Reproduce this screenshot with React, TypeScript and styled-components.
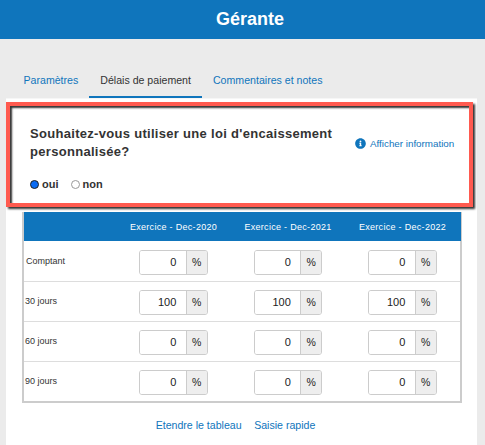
import { FC } from 'react'
import styled, { createGlobalStyle } from 'styled-components'
import { FaInfoCircle } from 'react-icons/fa'

const GlobalStyle = createGlobalStyle`
  html, body {
    margin: 0;
    padding: 0;
    background: #ebebeb;
    overflow: hidden;
  }
  body {
    font-family: "Liberation Sans", Arial, sans-serif;
    color: #333;
  }
`

const Page = styled.div`
  width: 485px;
  height: 445px;
  display: flex;
  flex-direction: column;
  overflow: hidden;
`

const Header = styled.header`
  height: 39px;
  flex: none;
  display: flex;
  align-items: center;
  justify-content: center;
  background: #0f75bc;
  color: #fff;
  font-size: 18px;
  font-weight: 700;
  padding-left: 15px;
`

const Tabs = styled.nav`
  height: 60px;
  flex: none;
  display: flex;
  align-items: flex-end;
  padding-left: 12.5px;
`

const Tab = styled.a<{ $active?: boolean }>`
  height: 38px;
  box-sizing: border-box;
  padding: 2px 11px 0;
  display: flex;
  align-items: center;
  font-size: 10.6px;
  white-space: nowrap;
  color: ${(p) => (p.$active ? '#333' : '#0f75bc')};
  border-bottom: 3px solid ${(p) => (p.$active ? '#0f75bc' : 'transparent')};
`

const Panel = styled.main`
  flex: 1;
  margin: 0 8px 0 6px;
  padding-top: 3px;
  background: #fff;
  box-shadow: 0 -1px 0 #f6f6f6;
`

const Callout = styled.section`
  width: 467px;
  height: 105px;
  box-sizing: border-box;
  padding: 19px 20px 0 20px;
  background: #fff;
  border: 4px solid #ff5a4f;
  box-shadow: 2px 2px 2px #333, inset 2px 2px 2px #333;
  display: grid;
  grid-template-columns: 325px 1fr;
  grid-template-rows: 36px auto;
  align-content: start;
  row-gap: 17px;
`

const Question = styled.h2`
  margin: 0;
  font-size: 13px;
  line-height: 18px;
  font-weight: 700;
  letter-spacing: 0.3px;
  color: #333;
`

const InfoLink = styled.a`
  display: flex;
  align-items: center;
  gap: 4px;
  height: 18px;
  margin-top: 9px;
  font-size: 9.8px;
  white-space: nowrap;
  color: #0f75bc;
  svg {
    font-size: 11px;
    flex: none;
  }
`

const RadioRow = styled.div`
  grid-column: 1 / span 2;
  display: flex;
  align-items: center;
  gap: 12px;
`

const RadioLabel = styled.label`
  display: flex;
  align-items: center;
  gap: 3px;
  font-size: 11px;
  font-weight: 700;
  color: #333;
`

const Radio = styled.input.attrs({ type: 'radio' })`
  appearance: none;
  margin: 0;
  width: 9px;
  height: 9px;
  border-radius: 50%;
  border: 1px solid #999;
  background: #fff;
  box-sizing: border-box;
  &:checked {
    border: 1.5px solid #222;
    background: #0a6cf5;
  }
`

const Table = styled.div`
  width: 440px;
  box-sizing: border-box;
  margin: 5px 0 0 16px;
  border: 2px solid #ccc;
  border-top: 0;
`

const HeadRow = styled.div`
  margin: 0 -1px 0 0;
  height: 29px;
  display: grid;
  grid-template-columns: 92.25px repeat(3, 114.5px);
  align-items: center;
  background: #0f75bc;
`

const HeadCell = styled.div`
  font-size: 9px;
  letter-spacing: 0.3px;
  text-align: center;
  white-space: nowrap;
  color: #fff;
`

const Row = styled.div`
  height: 40px;
  display: grid;
  grid-template-columns: 92.25px repeat(3, 114.5px);
  align-items: center;
  padding-top: 2px;
  border-top: 1px solid #ddd;
  box-sizing: border-box;
  &:first-of-type {
    border-top: 0;
    padding-top: 3px;
  }
`

const RowLabel = styled.div<{ $inset?: boolean }>`
  font-size: 9px;
  padding-left: ${(p) => (p.$inset ? '2px' : '1px')};
  margin-top: -3px;
  color: #333;
`

const Field = styled.div`
  justify-self: center;
  width: 68.5px;
  height: 25px;
  box-sizing: border-box;
  display: flex;
  border: 1px solid #ccc;
  border-radius: 3px;
  overflow: hidden;
  font-size: 11px;
  color: #222;
`

const Amount = styled.div`
  flex: 1;
  text-align: right;
  line-height: 23px;
  padding-right: 9.5px;
  background: #fff;
`

const Unit = styled.div`
  width: 20px;
  flex: none;
  text-align: center;
  font-size: 10.5px;
  line-height: 22px;
  background: #eee;
  border-left: 1px solid #ccc;
`

const Links = styled.div`
  display: flex;
  justify-content: center;
  gap: 12.5px;
  margin-top: 16px;
  padding-right: 12px;
  font-size: 10.6px;
  color: #0f75bc;
`

const years = ['Dec-2020', 'Dec-2021', 'Dec-2022']

const rows = [
  { label: 'Comptant', value: 0 },
  { label: '30 jours', value: 100 },
  { label: '60 jours', value: 0 },
  { label: '90 jours', value: 0 },
]

const PercentField: FC<{ value: number }> = ({ value }) => (
  <Field>
    <Amount>{value}</Amount>
    <Unit>%</Unit>
  </Field>
)

export default function App() {
  return (
    <Page>
      <GlobalStyle />
      <Header>Gérante</Header>
      <Tabs>
        <Tab>Paramètres</Tab>
        <Tab $active>Délais de paiement</Tab>
        <Tab>Commentaires et notes</Tab>
      </Tabs>
      <Panel>
        <Callout>
          <Question>Souhaitez-vous utiliser une loi d'encaissement personnalisée?</Question>
          <InfoLink>
            <FaInfoCircle />
            Afficher information
          </InfoLink>
          <RadioRow>
            <RadioLabel>
              <Radio name="loi" defaultChecked />
              oui
            </RadioLabel>
            <RadioLabel>
              <Radio name="loi" />
              non
            </RadioLabel>
          </RadioRow>
        </Callout>
        <Table>
          <HeadRow>
            <div />
            {years.map((y) => (
              <HeadCell key={y}>Exercice - {y}</HeadCell>
            ))}
          </HeadRow>
          <div>
            {rows.map((r) => (
              <Row key={r.label}>
                <RowLabel $inset={r.label === 'Comptant'}>{r.label}</RowLabel>
                {years.map((y) => (
                  <PercentField key={y} value={r.value} />
                ))}
              </Row>
            ))}
          </div>
        </Table>
        <Links>
          <a>Etendre le tableau</a>
          <a>Saisie rapide</a>
        </Links>
      </Panel>
    </Page>
  )
}
